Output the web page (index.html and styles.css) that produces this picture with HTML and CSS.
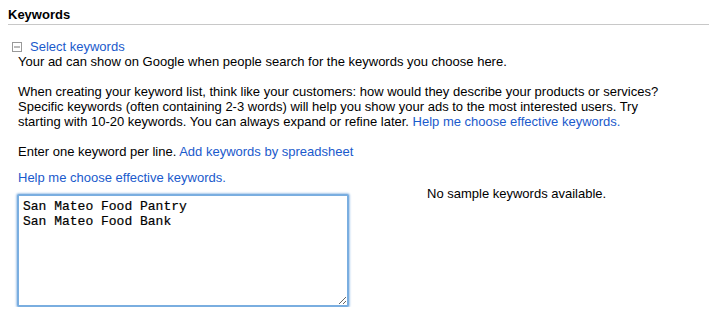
FILE: index.html
```html
<!DOCTYPE html>
<html lang="en">
<head>
    <meta charset="UTF-8">
    <title>Keywords</title>
    <link rel="stylesheet" href="styles.css">
</head>
<body>
    <!-- Section Header -->
    <div class="header">Keywords</div>

    <div class="section">
        <div class="toggle-row">
            <span class="toggle-icon">
                <svg width="10" height="10" viewBox="0 0 10 10">
                    <rect x="0.5" y="0.5" width="9" height="9" fill="#fff" stroke="#999"/>
                    <line x1="2" y1="5" x2="8" y2="5" stroke="#777"/>
                </svg>
            </span>
            <a class="link" href="#">Select keywords</a>
        </div>

        <div class="content">
            <p class="text">Your ad can show on Google when people search for the keywords you choose here.</p>
            <p class="text">When creating your keyword list, think like your customers: how would they describe your products or services?<br>
                Specific keywords (often containing 2-3 words) will help you show your ads to the most interested users. Try<br>
                starting with 10-20 keywords. You can always expand or refine later. <a class="link" href="#">Help me choose effective keywords.</a></p>
            <p class="text">Enter one keyword per line. <a class="link" href="#">Add keywords by spreadsheet</a></p>

            <div class="keyword-row">
                <div class="keyword-input">
                    <a class="link help-link" href="#">Help me choose effective keywords.</a>
                    <textarea class="keyword-list">San Mateo Food Pantry
San Mateo Food Bank</textarea>
                </div>
                <div class="samples">No sample keywords available.</div>
            </div>
        </div>
    </div>
</body>
</html>
```

FILE: styles.css
```css
html, body {
    margin: 0;
    padding: 0;
    background: #fff;
    font-family: "Liberation Sans", Arial, sans-serif;
    font-size: 13px;
    color: #000;
}
.header {
    margin-left: 8px;
    padding-top: 7px;
    padding-bottom: 2px;
    font-weight: bold;
    line-height: 15px;
    border-bottom: 1px solid #c8c8c8;
}
.section {
    padding-left: 12px;
    padding-top: 14px;
}
.toggle-row {
    display: flex;
    align-items: center;
    gap: 8px;
    line-height: 15px;
}
.toggle-icon {
    display: flex;
}
.link {
    color: #1a5acc;
    text-decoration: none;
}
.content {
    padding-left: 6px;
}
.text {
    margin: 0 0 15px 0;
    line-height: 15px;
    white-space: nowrap;
}
.keyword-row {
    display: flex;
    margin-top: -4px;
}
.keyword-input {
    display: flex;
    flex-direction: column;
    width: 350px;
}
.help-link {
    line-height: 15px;
    margin-bottom: 9px;
}
.keyword-list {
    width: 320px;
    height: 103px;
    margin-left: -1px;
    padding: 3px 4px;
    border: 2px solid #7aaee0;
    box-shadow: 0 0 2px 1px #a9c8ea;
    border-radius: 2px;
    font-family: "Liberation Mono", "Courier New", monospace;
    font-size: 13px;
    line-height: 15px;
    color: #000;
    -webkit-text-stroke: 0.2px #000;
    resize: both;
    outline: none;
}
.samples {
    margin-left: 59px;
    padding-top: 16px;
    line-height: 15px;
}
```
